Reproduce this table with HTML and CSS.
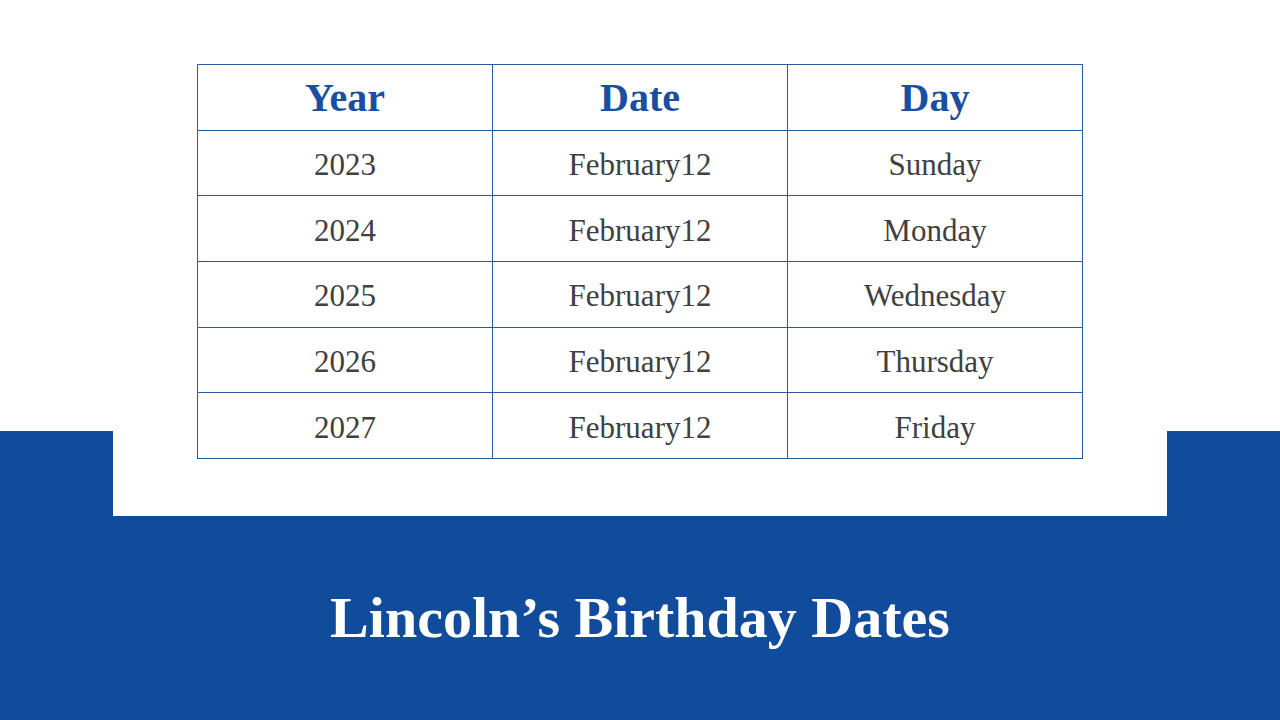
FILE: index.html
```html
<!DOCTYPE html>
<html lang="en">
<head>
<meta charset="utf-8">
<title>Lincoln's Birthday Dates</title>
<link rel="stylesheet" href="styles.css">
</head>
<body>
<div class="slide">
  <div class="panel">
    <table class="dates">
      <thead>
        <tr><th>Year</th><th>Date</th><th>Day</th></tr>
      </thead>
      <tbody>
        <tr><td>2023</td><td>February12</td><td>Sunday</td></tr>
        <tr><td>2024</td><td>February12</td><td>Monday</td></tr>
        <tr><td>2025</td><td>February12</td><td>Wednesday</td></tr>
        <tr><td>2026</td><td>February12</td><td>Thursday</td></tr>
        <tr><td>2027</td><td>February12</td><td>Friday</td></tr>
      </tbody>
    </table>
  </div>
  <div class="title-band">
    <h1 class="title">Lincoln’s Birthday Dates</h1>
  </div>
</div>
</body>
</html>
```
FILE: styles.css
```css
* { box-sizing: border-box; }
html, body { margin: 0; padding: 0; }
body { background: #ffffff; }
.slide {
  width: 1280px;
  height: 720px;
  overflow: hidden;
  background: linear-gradient(#ffffff 0, #ffffff 431px, #114c9c 431px, #114c9c 100%);
  display: flex;
  flex-direction: column;
  font-family: "Liberation Serif", "Times New Roman", serif;
}
.panel {
  margin: 0 113px;
  height: 516px;
  background: #ffffff;
  padding-top: 64px;
  display: flex;
  justify-content: center;
}
.dates {
  border-collapse: collapse;
  table-layout: fixed;
  width: 886px;
  height: 395px;
}
.dates th, .dates td {
  border: 1px solid #2a5aa6;
  text-align: center;
  vertical-align: middle;
  padding: 0;
  height: 65.7px;
  width: 295px;
}
.dates th {
  color: #1a4f9f;
  font-weight: bold;
  font-size: 40px;
}
.dates td {
  color: #404040;
  font-weight: normal;
  font-size: 31px;
  padding-top: 4px;
}
.title-band {
  flex: 1;
  display: flex;
  align-items: center;
  justify-content: center;
}
.title {
  margin: 0;
  color: #ffffff;
  font-weight: bold;
  font-size: 58px;
  line-height: 1;
}
```
